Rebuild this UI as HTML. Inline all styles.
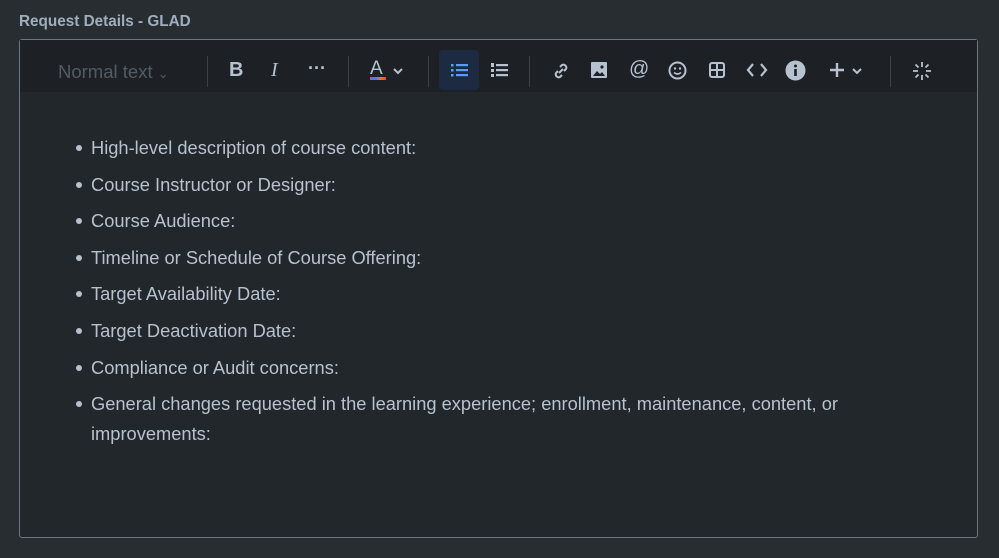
<!DOCTYPE html>
<html><head><style>
body{margin:0;width:999px;height:558px;background:#282d32;font-family:"Liberation Sans",sans-serif;position:relative;overflow:hidden}
.lbl{position:absolute;left:19px;top:13px;font-size:15.3px;font-weight:bold;color:#9fadbc}
.box{position:absolute;left:19px;top:39px;width:957px;height:497px;border:1px solid #6b7683;border-radius:3px;background:#22272b}
.tb{position:absolute;left:0;top:0;width:957px;height:52px;background:#1d2125}
.i{position:absolute;top:16px;color:#b6c2cf}
.sep{position:absolute;top:16px;width:1px;height:31px;background:#3a4047}
ul{position:absolute;left:51px;top:93px;margin:0;padding:0 0 0 20px;width:840px;color:#b6c2cf;font-size:18.3px;line-height:30px;list-style:none}
li{margin-bottom:6.6px;position:relative}
li::before{content:"";position:absolute;left:-15px;top:12px;width:6px;height:6px;border-radius:50%;background:#b6c2cf}
</style></head><body>
<div class="lbl">Request Details - GLAD</div>
<div class="box">
<div class="tb">
<div style="position:absolute;left:38px;top:21px;font-size:18.5px;color:#525b64">Normal text <span style="font-size:13px">&#8964;</span></div>
<div class="sep" style="left:187px;top:16px"></div>
<div class="i" style="left:209px;top:19px;font-weight:bold;font-size:20px">B</div>
<div class="i" style="left:251px;top:19px;font-style:italic;font-size:20px;font-family:'Liberation Serif',serif">I</div>
<div class="i" style="left:288px;top:18px;font-size:18px;font-weight:bold">···</div>
<div class="sep" style="left:328px"></div>
<div class="i" style="left:350px;top:18px;font-size:19px">A</div>
<div style="position:absolute;left:350px;top:37px;width:16px;height:3px;background:linear-gradient(90deg,#8b5cf6,#3b82f6,#f97316,#ef4444)"></div>
<svg class="i" style="left:372px;top:27px" width="12" height="8"><path d="M2 2l4 4 4-4" stroke="#b6c2cf" stroke-width="2" fill="none"/></svg>
<div class="sep" style="left:408px"></div>
<div style="position:absolute;left:419px;top:10px;width:40px;height:40px;border-radius:4px;background:#1c2b41"></div>
<svg class="i" style="left:431px;top:23px" width="18" height="14"><g fill="#579dff"><rect x="0" y="1" width="2.5" height="2.5"/><rect x="0" y="6" width="2.5" height="2.5"/><rect x="0" y="11" width="2.5" height="2.5"/><rect x="5" y="1" width="12" height="2.2"/><rect x="5" y="6" width="12" height="2.2"/><rect x="5" y="11" width="12" height="2.2"/></g></svg>
<svg class="i" style="left:471px;top:23px" width="18" height="15"><g fill="#b6c2cf"><rect x="5" y="1" width="12" height="2.2"/><rect x="5" y="6" width="12" height="2.2"/><rect x="5" y="11" width="12" height="2.2"/><rect x="0" y="0" width="3" height="4"/><rect x="0" y="6" width="3" height="3"/><rect x="0" y="11" width="3" height="3"/></g></svg>
<div class="sep" style="left:509px"></div>
<svg class="i" style="left:531px;top:21px" width="20" height="20" viewBox="0 0 20 20"><g stroke="#b6c2cf" stroke-width="2" fill="none"><path d="M8 12l4-4"/><path d="M9 6l2-2a3 3 0 014 4l-2 2"/><path d="M11 14l-2 2a3 3 0 01-4-4l2-2"/></g></svg>
<svg class="i" style="left:571px;top:22px" width="16" height="16"><rect width="16" height="16" rx="1" fill="#b6c2cf"/><path d="M2 14l4-5 3 3 2-2 3 4z" fill="#1d2125"/><circle cx="11" cy="5" r="1.6" fill="#1d2125"/></svg>
<div class="i" style="left:609px;top:18px;font-size:20px">@</div>
<svg class="i" style="left:648px;top:21px" width="19" height="19"><circle cx="9.5" cy="9.5" r="8" stroke="#b6c2cf" stroke-width="2" fill="none"/><circle cx="7" cy="7.5" r="1.2" fill="#b6c2cf"/><circle cx="12" cy="7.5" r="1.2" fill="#b6c2cf"/><path d="M6 11.5q3.5 3 7 0" stroke="#b6c2cf" stroke-width="1.6" fill="none"/></svg>
<svg class="i" style="left:689px;top:22px" width="16" height="16"><rect x="1" y="1" width="14" height="14" rx="2" stroke="#b6c2cf" stroke-width="2" fill="none"/><path d="M8 1v14M1 8h14" stroke="#b6c2cf" stroke-width="2"/></svg>
<svg class="i" style="left:726px;top:22px" width="22" height="16"><path d="M7 2L2 8l5 6M15 2l5 6-5 6" stroke="#b6c2cf" stroke-width="2.2" fill="none"/></svg>
<svg class="i" style="left:765px;top:20px" width="21" height="21"><circle cx="10.5" cy="10.5" r="10" fill="#b6c2cf"/><rect x="9.2" y="9" width="2.6" height="7" fill="#1d2125"/><circle cx="10.5" cy="6" r="1.5" fill="#1d2125"/></svg>
<svg class="i" style="left:809px;top:22px" width="16" height="16"><path d="M8 1v14M1 8h14" stroke="#b6c2cf" stroke-width="2.4"/></svg>
<svg class="i" style="left:831px;top:27px" width="12" height="8"><path d="M2 2l4 4 4-4" stroke="#b6c2cf" stroke-width="2" fill="none"/></svg>
<div class="sep" style="left:870px"></div>
<svg class="i" style="left:892px;top:21px" width="20" height="20"><g stroke="#b6c2cf" stroke-width="1.8"><path d="M10 1v5M10 14v5M1 10h5M14 10h5M3.5 3.5l3 3M13.5 13.5l3 3M16.5 3.5l-3 3M6.5 13.5l-3 3"/></g></svg>
</div>
<ul>
<li>High-level description of course content:</li>
<li>Course Instructor or Designer:</li>
<li>Course Audience:</li>
<li>Timeline or Schedule of Course Offering:</li>
<li>Target Availability Date:</li>
<li>Target Deactivation Date:</li>
<li>Compliance or Audit concerns:</li>
<li>General changes requested in the learning experience; enrollment, maintenance, content, or improvements:</li>
</ul>
</div>
</body></html>
